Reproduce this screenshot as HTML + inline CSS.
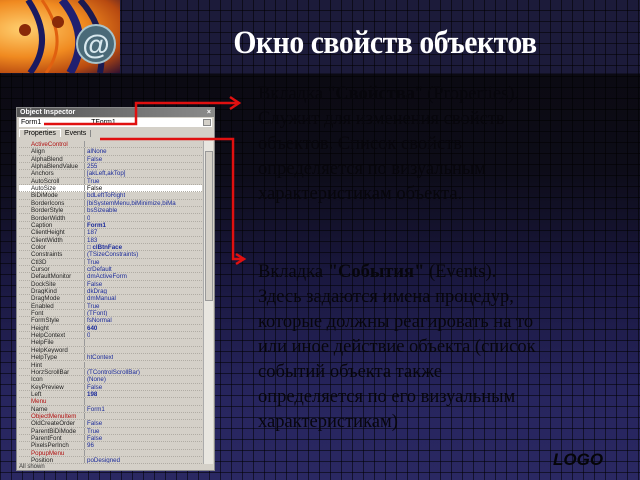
<!DOCTYPE html>
<html><head><meta charset="utf-8">
<style>
*{margin:0;padding:0;box-sizing:border-box}
body{width:640px;height:480px;overflow:hidden;position:relative;font-family:"Liberation Sans",sans-serif;
background:linear-gradient(180deg,#1c1b3a 0px,#1c1b3a 73px,#0b0a12 74px,#0d0c18 170px,#1a1840 280px,#27255e 400px,#2a2862 480px);}
.grid{position:absolute;inset:0;background-image:linear-gradient(90deg,rgba(0,0,0,.55) 1px,transparent 1px),linear-gradient(0deg,rgba(0,0,0,.55) 1px,transparent 1px);background-size:11px 11px;}
.banner{position:absolute;left:0;top:0;width:120px;height:73px;overflow:hidden;
background:radial-gradient(ellipse at 20% 40%,#ffd070 0%,#f08a20 45%,#b84a10 75%,#301030 100%);}
.title{position:absolute;left:190px;top:25px;width:390px;text-align:center;color:#fff;font-family:"Liberation Serif",serif;font-weight:bold;font-size:33px;letter-spacing:-0.5px;transform:scaleX(0.9)}
.txt{position:absolute;left:258px;font-family:"Liberation Serif",serif;font-size:18.5px;line-height:25px;color:#07060c;white-space:nowrap}
.logo{position:absolute;left:553px;top:450px;font-style:italic;font-weight:bold;font-size:17px;color:#050508}
.oi{position:absolute;left:16px;top:107px;width:199px;height:364px;background:#d4d0c8;border:1px solid #888;}
.tb{height:9px;background:linear-gradient(90deg,#555,#8a8a8a);color:#fff;font-size:7px;line-height:9px;padding-left:3px;font-weight:bold}
.cb{position:absolute;left:2px;top:10px;width:193px;height:9px;background:#fff;font-size:7px;line-height:9px;padding-left:2px}
.tabs{position:absolute;left:2px;top:20px;height:11px;font-size:7px;line-height:11px}
.rows{position:absolute;left:2px;top:33px;width:183px;height:323px;background:#d4d0c8;font-size:6.2px;overflow:hidden}
.r{position:absolute;left:0;width:183px;height:7.35px;line-height:7.2px;border-bottom:1px dotted #b0aca4;display:flex;white-space:nowrap}
.n{width:66px;padding-left:12px;color:#222;border-right:1px solid #999;overflow:hidden}
.v{padding-left:2px;color:#1a2a9a;overflow:hidden}
.red{color:#b01010}
.sb{position:absolute;left:186px;top:33px;width:10px;height:323px;background:#e8e6e0;border-left:1px solid #aaa}
.st{position:absolute;left:2px;top:356px;height:6px;line-height:6px;font-size:6px;color:#333;background:#d4d0c8;width:193px}
</style></head><body>
<div class="grid"></div>
<div class="banner">
<svg width="120" height="73" style="position:absolute;left:0;top:0">
<path d="M28 0 Q55 40 30 73" stroke="#1a1a60" stroke-width="6" fill="none"/>
<path d="M42 0 Q70 40 46 73" stroke="#e06010" stroke-width="3" fill="none"/>
<path d="M62 0 Q92 36 70 73" stroke="#202070" stroke-width="8" fill="none"/>
<path d="M80 0 Q108 30 100 73" stroke="#1a1a50" stroke-width="6" fill="none"/>
<ellipse cx="25" cy="30" rx="6" ry="6" fill="#8a2a08"/>
<ellipse cx="58" cy="22" rx="6" ry="6" fill="#8a2a08"/>
<circle cx="96" cy="44" r="19" fill="#4a6a78" stroke="#a8c4cc" stroke-width="2"/>
<text x="96" y="54" text-anchor="middle" font-family="Liberation Sans" font-weight="bold" font-size="28" fill="#d8e8ee">@</text>
</svg>
</div>
<div class="title">Окно свойств объектов</div>

<div class="oi">
<div class="tb">Object Inspector<span style="float:right;padding-right:3px">×</span></div>
<div class="cb">Form1<span style="margin-left:50px">TForm1</span><span style="position:absolute;right:1px;top:1px;width:8px;height:7px;background:#d4d0c8;border:1px solid #888"></span></div>
<div class="tabs"><span style="background:#d4d0c8;border:1px solid #fff;border-bottom:none;padding:0 4px">Properties</span><span style="padding:0 4px;border-right:1px solid #888">Events</span></div>
<div class="rows" id="rows"></div>
<div class="sb"><div style="position:absolute;left:1px;top:10px;width:8px;height:150px;background:#d4d0c8;border:1px solid #999"></div></div>
<div class="st">All shown</div>
</div>
<script>
var d=[["ActiveControl","",1],["Align","alNone"],["AlphaBlend","False"],["AlphaBlendValue","255"],["Anchors","[akLeft,akTop]"],["AutoScroll","True"],["AutoSize","False",0,1],["BiDiMode","bdLeftToRight"],["BorderIcons","[biSystemMenu,biMinimize,biMa"],["BorderStyle","bsSizeable"],["BorderWidth","0"],["Caption","<b>Form1</b>"],["ClientHeight","187"],["ClientWidth","183"],["Color","<b>□ clBtnFace</b>"],["Constraints","(TSizeConstraints)"],["Ctl3D","True"],["Cursor","crDefault"],["DefaultMonitor","dmActiveForm"],["DockSite","False"],["DragKind","dkDrag"],["DragMode","dmManual"],["Enabled","True"],["Font","(TFont)"],["FormStyle","fsNormal"],["Height","<b>640</b>"],["HelpContext","0"],["HelpFile",""],["HelpKeyword",""],["HelpType","htContext"],["Hint",""],["HorzScrollBar","(TControlScrollBar)"],["Icon","(None)"],["KeyPreview","False"],["Left","<b>198</b>"],["Menu","",1],["Name","Form1"],["ObjectMenuItem","",1],["OldCreateOrder","False"],["ParentBiDiMode","True"],["ParentFont","False"],["PixelsPerInch","96"],["PopupMenu","",1],["Position","poDesigned"]];
var h="";d.forEach(function(x,i){h+='<div class="r" style="top:'+(i*7.35).toFixed(2)+'px'+(x[3]?';background:#fff':'')+'"><span class="n'+(x[2]?' red':'')+'">'+x[0]+'</span><span class="v"'+(x[3]?' style="color:#000"':'')+'>'+x[1]+'</span></div>';});
document.getElementById("rows").innerHTML=h;
</script>

<svg width="640" height="480" style="position:absolute;left:0;top:0">
<g stroke="#e01010" stroke-width="2.5" fill="none">
<path d="M44 124 H136 V103 H238"/>
<path d="M230 97 L239 103 L230 109"/>
<path d="M100 139 H233 V259 H243"/>
<path d="M236 254 L244 259 L236 264"/>
</g>
</svg>

<div class="txt" style="top:82px">Вкладка "<b>Свойства</b>" (Properties).<br>Служит для изменения свойств<br>объектов. Список свойств<br>определяется по визуальным<br>характеристикам объекта.</div>
<div class="txt" style="top:260px">Вкладка <b>"События"</b> (Events).<br>Здесь задаются имена процедур,<br>которые должны реагировать на то<br>или иное действие объекта (список<br>событий объекта также<br>определяется по его визуальным<br>характеристикам)</div>
<div class="logo">LOGO</div>
</body></html>
